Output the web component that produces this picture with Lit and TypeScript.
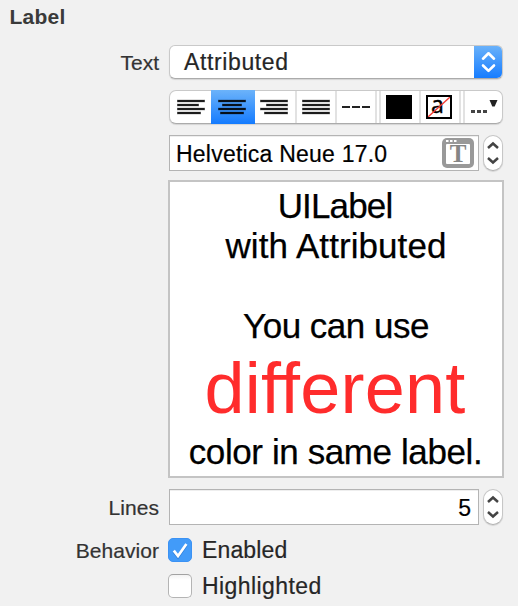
import { LitElement, html, svg, css } from "lit";
import { customElement, property } from "lit/decorators.js";

type Bar = [number, number];

const ALIGN: Record<string, Bar[]> = {
  left: [[0, 28], [0, 22], [0, 28], [0, 24]],
  center: [[0, 28], [4, 24], [0, 28], [2, 26]],
  right: [[0, 28], [6, 28], [0, 28], [4, 28]],
  justify: [[0, 28], [0, 28], [0, 28], [0, 28]],
};

@customElement("align-icon")
class AlignIcon extends LitElement {
  @property() kind = "left";
  static styles = css`
    :host { display: block; height: 16px; }
    svg { display: block; }
    .halo { stroke: #000; stroke-opacity: 0.12; stroke-width: 4; }
    .bar { stroke: #000; stroke-opacity: 0.88; stroke-width: 2; stroke-linecap: round; }
  `;
  render() {
    const rows = ALIGN[this.kind];
    return html`<svg width="28" height="16" viewBox="0 0 28 16">
      ${rows.map(([a, b], i) => svg`
        <line class="halo" x1=${a} x2=${b} y1=${2 + i * 4} y2=${2 + i * 4}></line>
        <line class="bar" x1=${a + 1} x2=${b - 1} y1=${2 + i * 4} y2=${2 + i * 4}></line>`)}
    </svg>`;
  }
}

@customElement("value-stepper")
class ValueStepper extends LitElement {
  static styles = css`
    :host {
      display: block; box-sizing: border-box; width: 20px; height: 36px;
      border: 1px solid #c6c6c6; border-bottom-color: #b2b2b2; border-radius: 10px;
      background: #fff; box-shadow: 0 1px 1px rgba(0, 0, 0, 0.12);
    }
    svg { display: block; }
    path { fill: none; stroke: #444; stroke-width: 2.5; }
  `;
  render() {
    return html`<svg width="18" height="34" viewBox="0 0 18 34">
      <path d="M4 12 9 7.5l5 4.5M4 22 9 26.5l5-4.5"></path>
    </svg>`;
  }
}

@customElement("check-box")
class CheckBox extends LitElement {
  @property({ type: Boolean, reflect: true }) checked = false;
  static styles = css`
    :host {
      display: block; box-sizing: border-box; width: 24px; height: 24px;
      border: 1px solid #b4b4b4; border-top-color: #a2a2a2; border-radius: 5px;
      background: linear-gradient(#f3f3f3, #fff 5px);
    }
    :host([checked]) { border-color: #3b92f4; background: #429bf9; }
    svg { display: block; }
    .shade { fill: none; stroke: #2f7fd8; stroke-width: 3; }
    .tick { fill: none; stroke: #fff; stroke-width: 2.7; }
  `;
  render() {
    return this.checked
      ? html`<svg width="22" height="22" viewBox="0 0 22 22">
          <path class="shade" d="M4.8 12.6 9 18 17.4 6"></path>
          <path class="tick" d="M4.8 11.6 9 17 17.4 5"></path>
        </svg>`
      : null;
  }
}

@customElement("app-root")
class AppRoot extends LitElement {
  static styles = css`
    :host {
      display: block; box-sizing: border-box; width: 518px; height: 606px;
      overflow: hidden; background: #f1f1f1; color: #262626;
      font-family: "Liberation Sans", Arial, sans-serif; white-space: nowrap;
    }
    .heading {
      height: 45px; padding: 3px 0 0 9.5px; box-sizing: border-box;
      font-size: 21px; font-weight: 700; line-height: 28px; letter-spacing: 0.25px; color: #3a3a3a;
    }
    .row { display: grid; grid-template-columns: 159px 334px; column-gap: 10px; }
    .name { text-align: right; font-size: 21px; line-height: 38px; color: #333; letter-spacing: 0.05px; -webkit-text-stroke: 0.2px #333; }
    .name.tight { letter-spacing: 0; line-height: 36px; }
    .popup-row { height: 45px; }
    .popup {
      display: flex; box-sizing: border-box; height: 34px; border-radius: 6px; overflow: hidden;
      background: #fff; border: 1px solid #c9c9c9; border-bottom-color: #ababab;
      box-shadow: 0 1px 1px rgba(0, 0, 0, 0.12);
    }
    .popup-text { flex: 1; padding-left: 14px; font-size: 23px; line-height: 33px; letter-spacing: 0.62px; -webkit-text-stroke: 0.2px #262626; }
    .popup-cap { width: 29px; margin: -1px -1px -1px 0; background: linear-gradient(#6cb3fa, #147bff); }
    .popup-cap svg, .font-panel { display: block; }
    .chev { fill: none; stroke: #fff; stroke-width: 2.6; stroke-linecap: round; stroke-linejoin: round; }
    .seg-row { height: 45px; }
    .segments {
      display: flex; box-sizing: border-box; height: 34px; border-radius: 7px;
      background: #fff; border: 1px solid #c9c9c9; border-bottom-color: #ababab;
      box-shadow: 0 1px 1px rgba(0, 0, 0, 0.12);
    }
    .seg { display: flex; align-items: center; justify-content: center; box-sizing: border-box; width: 40px; border-right: 2px solid #e2e2e2; }
    .seg svg { display: block; }
    .seg.first { width: 41px; border: 0; }
    .seg.on { width: 44px; margin: -1px 0; padding-right: 2px; border: 0; background: linear-gradient(#6cb3fa, #147bff); }
    .seg.after { width: 42px; padding-right: 2px; }
    .seg.double { width: 44px; border-right: 6px double #e2e2e2; }
    .seg.color { padding-right: 2px; }
    .seg.last { width: 37px; border: 0; }
    .swatch { width: 26px; height: 24px; background: #000; }
    .struck {
      position: relative; box-sizing: border-box; width: 26px; height: 24px; margin-right: 2px;
      border: 2px solid #000; background: #fff; color: #000; text-align: left; padding-left: 3px;
      font: 23px/14px "Noto Sans", sans-serif; -webkit-text-stroke: 0.3px #000;
    }
    .struck svg { position: absolute; left: 0; top: 0; }
    .field-row { display: grid; grid-template-columns: 159px 310px 20px; column-gap: 10px; }
    .field-row value-stepper { margin-left: -6px; }
    .field {
      display: flex; align-items: center; justify-content: space-between; box-sizing: border-box;
      height: 36px; border: 1px solid #b4b4b4; background: #fff; color: #000;
      box-shadow: inset 0 1px 0 #eee; font-size: 23px; padding: 2px 4px 0 6px;
      -webkit-text-stroke: 0.2px #000;
    }
    .field span { letter-spacing: 0.22px; }
    .font-panel { margin-top: -2px; -webkit-text-stroke: 0; }
    .serif { font: bold 25px "Liberation Serif", serif; fill: #858585; }
    .number { justify-content: flex-end; padding-right: 7px; }
    .box-row { margin: 9px 0 11px 168px; }
    .rich {
      box-sizing: border-box; width: 336px; height: 298px; border: 2px solid #c4c4c4;
      background: #fff; color: #000; padding-top: 4px; text-align: center; font-size: 35px; line-height: 40px;
      -webkit-text-stroke: 0.25px #000;
    }
    .l1 { letter-spacing: -0.85px; padding-right: 2px; }
    .l2 { letter-spacing: 0.08px; }
    .l4 { letter-spacing: -0.5px; }
    .l5 { letter-spacing: 0.25px; font-size: 72px; line-height: 84px; color: #ff2c2c; height: 86px; padding-right: 2px; -webkit-text-stroke: 0; }
    .l6 { letter-spacing: -0.4px; padding-right: 1px; }
    .blank { height: 40px; }
    .checks { display: grid; grid-template-columns: 159px auto; column-gap: 9px; padding-top: 5px; }
    .list { display: flex; flex-direction: column; }
    .option { display: flex; align-items: center; gap: 10px; height: 36px; font-size: 23px; letter-spacing: 0.15px; -webkit-text-stroke: 0.2px #262626; }
    .option.wide { letter-spacing: 0.42px; }
  `;

  render() {
    return html`
      <div class="heading">Label</div>
      <div class="row popup-row">
        <div class="name tight">Text</div>
        <div class="popup">
          <div class="popup-text">Attributed</div>
          <div class="popup-cap">
            <svg width="29" height="34" viewBox="0 0 29 34">
              <path class="chev" d="M9 13.7 14.5 8.3 20 13.7M9 20.5l5.5 5.4 5.5-5.4"></path>
            </svg>
          </div>
        </div>
      </div>
      <div class="row seg-row">
        <div></div>
        <div class="segments">
          <div class="seg first"><align-icon kind="left"></align-icon></div>
          <div class="seg on"><align-icon kind="center"></align-icon></div>
          <div class="seg after"><align-icon kind="right"></align-icon></div>
          <div class="seg"><align-icon kind="justify"></align-icon></div>
          <div class="seg double">
            <svg width="30" height="4" viewBox="0 0 30 4">
              <path d="M1 2h8M11 2h8M21 2h8" stroke="#222" stroke-width="2.2"></path>
            </svg>
          </div>
          <div class="seg color"><div class="swatch"></div></div>
          <div class="seg double">
            <div class="struck">a<svg width="22" height="20" viewBox="0 0 22 20">
              <path d="M0 20 22 0" stroke="#f33b35" stroke-width="1.3"></path>
            </svg></div>
          </div>
          <div class="seg last">
            <svg width="28" height="20" viewBox="0 0 28 20">
              <path d="M1 14.5h4M7 14.5h4M13 14.5h4" stroke="#444" stroke-width="3"></path>
              <path d="M19.5 3h8l-2.8 6.5h-2.4z" fill="#222"></path>
            </svg>
          </div>
        </div>
      </div>
      <div class="field-row">
        <div></div>
        <div class="field">
          <span>Helvetica Neue 17.0</span>
          <svg class="font-panel" width="32" height="30" viewBox="0 0 32 30">
            <rect width="32" height="30" rx="5" fill="#999"></rect>
            <path d="M4 2h2.5v2H4zM8 2h2.5v2H8zM12 2h2.5v2H12z" fill="#fff"></path>
            <rect x="4" y="6" width="24" height="20" rx="1" fill="#fff"></rect>
            <text class="serif" x="16" y="24" text-anchor="middle">T</text>
          </svg>
        </div>
        <value-stepper></value-stepper>
      </div>
      <div class="box-row">
        <div class="rich">
          <div class="l1">UILabel</div>
          <div class="l2">with Attributed</div>
          <div class="blank"></div>
          <div class="l4">You can use</div>
          <div class="l5">different</div>
          <div class="l6">color in same label.</div>
        </div>
      </div>
      <div class="field-row">
        <div class="name">Lines</div>
        <div class="field number">5</div>
        <value-stepper></value-stepper>
      </div>
      <div class="checks">
        <div class="name">Behavior</div>
        <div class="list">
          <div class="option"><check-box checked></check-box>Enabled</div>
          <div class="option wide"><check-box></check-box>Highlighted</div>
        </div>
      </div>
    `;
  }
}
